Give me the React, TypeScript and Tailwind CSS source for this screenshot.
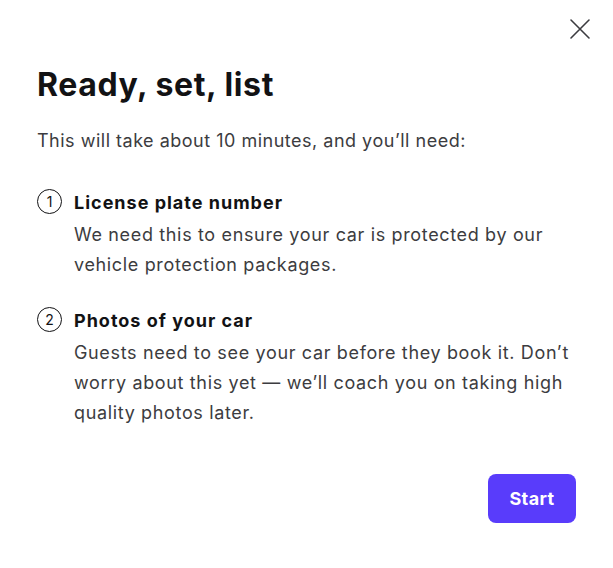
import React from 'react';

const steps = [
    {
        title: 'License plate number',
        body: 'We need this to ensure your car is protected by our vehicle protection packages.',
    },
    {
        title: 'Photos of your car',
        body: 'Guests need to see your car before they book it. Don\u2019t worry about this yet \u2014 we\u2019ll coach you on taking high quality photos later.',
    },
];

export default function App() {
    return (
        <div className="w-[613px] h-[568px] bg-white text-[#121214] relative" style={{ fontFamily: 'Inter, "Liberation Sans", sans-serif' }}>
            <button className="absolute top-[18px] right-[22px] w-[22px] h-[22px] flex items-center justify-center text-[#3c3c40]">
                <svg width="22" height="22" viewBox="0 0 22 22" fill="none" stroke="currentColor" strokeWidth="1.6" strokeLinecap="round">
                    <path d="M2 2L20 20M20 2L2 20" />
                </svg>
            </button>

            <div className="pt-[65px] px-[37px] flex flex-col">
                <h1 className="text-[32px] leading-[40px] font-bold tracking-[0.6px]">Ready, set, list</h1>
                <p className="mt-[21px] text-[18px] leading-[30px] tracking-[0.5px] text-[#3c3c40]">This will take about 10 minutes, and you’ll need:</p>

                <div className="mt-[32px] flex flex-col gap-[26px]">
                    {steps.map((s, i) => (
                        <div key={s.title} className="flex gap-[12px]">
                            <div className="w-[25px] h-[25px] mt-[1px] shrink-0 rounded-full border border-[#121214] flex items-center justify-center text-[14px] font-normal">
                                {i + 1}
                            </div>
                            <div className="flex flex-col">
                                <div className="text-[18px] leading-[30px] font-bold tracking-[1px] mb-[2px]">{s.title}</div>
                                <div className="text-[18px] leading-[30px] tracking-[0.65px] text-[#3c3c40]">{s.body}</div>
                            </div>
                        </div>
                    ))}
                </div>

                <div className="mt-[46px] flex justify-end">
                    <button className="w-[88px] h-[49px] rounded-[8px] bg-[#593cfb] text-white text-[18px] font-bold tracking-[0.4px]">
                        Start
                    </button>
                </div>
            </div>
        </div>
    );
}
